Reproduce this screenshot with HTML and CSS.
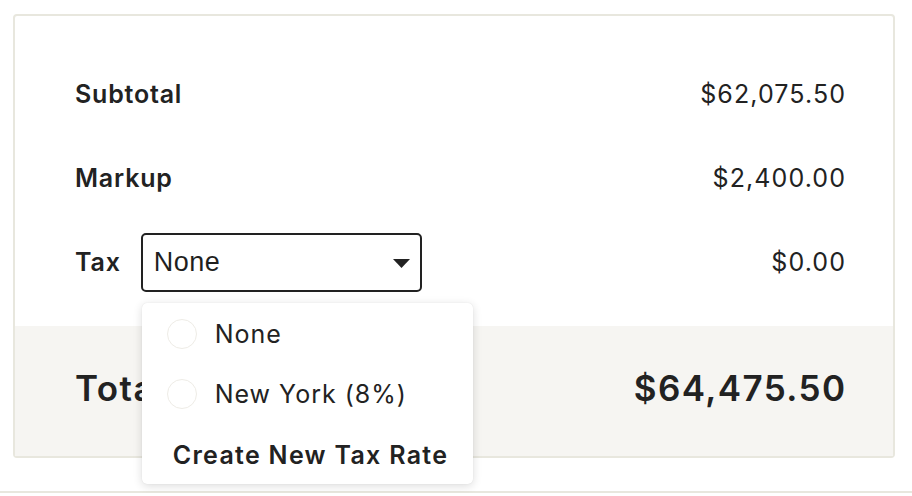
FILE: index.html
```html
<!DOCTYPE html>
<html lang="en">
<head>
<meta charset="utf-8">
<link rel="stylesheet" href="styles.css">
</head>
<body>
<div class="page">
  <div class="card">
    <div class="rows">
      <div class="row">
        <span class="label">Subtotal</span>
        <span class="value">$62,075.50</span>
      </div>
      <div class="row">
        <span class="label">Markup</span>
        <span class="value">$2,400.00</span>
      </div>
      <div class="row">
        <div class="tax">
          <span class="label">Tax</span>
          <div class="select-wrap">
            <div class="select">
              <span class="select-text">None</span>
              <svg class="caret" width="17" height="9" viewBox="0 0 17 9"><path d="M0 0H17L8.5 9Z" fill="#222"/></svg>
            </div>
            <div class="menu">
              <div class="option"><span class="radio"></span><span>None</span></div>
              <div class="option"><span class="radio"></span><span>New York (8%)</span></div>
              <div class="create">Create New Tax Rate</div>
            </div>
          </div>
        </div>
        <span class="value">$0.00</span>
      </div>
    </div>
    <div class="footer">
      <span class="total-label">Total</span>
      <span class="total-value">$64,475.50</span>
    </div>
  </div>
  <div class="next"></div>
</div>
</body>
</html>
```
FILE: styles.css
```css
* { box-sizing: border-box; }
html, body { margin: 0; padding: 0; background: #fff; }
body { font-family: Inter, "Noto Sans", sans-serif; color: #222; }
.page { padding: 14px 17px 0 13px; }
.card {
  width: 882px;
  height: 444px;
  border: 2px solid #e8e7de;
  border-radius: 4px;
  display: flex;
  flex-direction: column;
}
.rows {
  flex: 1;
  padding: 36px 48px 0 60px;
  display: flex;
  flex-direction: column;
}
.row {
  height: 84px;
  display: flex;
  align-items: center;
  justify-content: space-between;
}
.label { font-size: 25px; font-weight: 600; letter-spacing: 0.8px; }
.value { font-size: 25px; font-weight: 400; letter-spacing: 1.1px; margin-right: -1.1px; }
.tax { display: flex; align-items: center; gap: 20px; }
.select-wrap { position: relative; }
.select {
  width: 281px;
  height: 59px;
  border: 2px solid #222;
  border-radius: 5px;
  display: flex;
  align-items: center;
  justify-content: space-between;
  padding: 0 10px 0 11px;
}
.select-text { font-family: "Liberation Sans", Arial, sans-serif; font-size: 27px; letter-spacing: 0.5px; color: #1f1f1f; }
.caret { margin-top: 2px; }
.menu {
  position: absolute;
  left: 1px;
  top: 70px;
  width: 331px;
  height: 181px;
  background: #fff;
  border-radius: 5px;
  box-shadow: 0 2px 10px rgba(0,0,0,0.14), 0 0 1px rgba(0,0,0,0.12);
  padding: 1px 0 0;
  z-index: 2;
}
.option {
  height: 60px;
  display: flex;
  align-items: center;
  gap: 18px;
  padding-left: 25px;
  font-size: 25px;
  letter-spacing: 1px;
}
.radio {
  width: 30px;
  height: 30px;
  border: 1.5px solid #eeece6;
  border-radius: 50%;
}
.create {
  padding: 16px 0 0 31px;
  font-size: 25px;
  font-weight: 600;
  letter-spacing: 1.3px;
}
.footer {
  height: 130px;
  background: #f6f5f2;
  display: flex;
  align-items: center;
  justify-content: space-between;
  padding: 0 48px 6px 60px;
}
.total-label, .total-value { font-size: 35px; font-weight: 600; letter-spacing: 1.4px; }
.total-value { margin-right: -1.4px; }
.next { height: 3px; border-bottom: 2px solid #e8e7de; margin: 32px -17px 0 -13px; }
```
